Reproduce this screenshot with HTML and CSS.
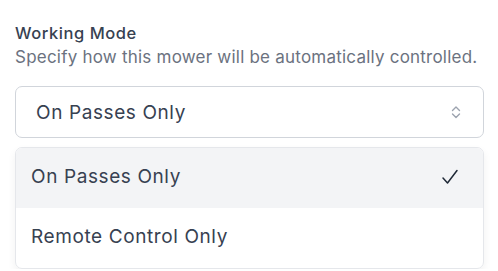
FILE: index.html
```html
<!DOCTYPE html>
<html>
<head>
<meta charset="utf-8">
<link rel="stylesheet" href="styles.css">
</head>
<body>
<div class="field">
  <div class="label">Working Mode</div>
  <div class="desc">Specify how this mower will be automatically controlled.</div>
  <div class="select">
    <span class="value">On Passes Only</span>
    <svg class="chev" width="12" height="18" viewBox="0 0 12 18" fill="none" stroke="#9ca3af" stroke-width="1.4" stroke-linecap="round" stroke-linejoin="round"><path d="M2.5 7.5 L6 4 L9.5 7.5"/><path d="M2.5 11 L6 14.5 L9.5 11"/></svg>
  </div>
  <div class="menu">
    <div class="option active">
      <span>On Passes Only</span>
      <svg class="check" width="18" height="18" viewBox="0 0 18 18" fill="none" stroke="#1f2937" stroke-width="1.5" stroke-linecap="round" stroke-linejoin="round"><path d="M2 10 L6.5 15 L16 2.5"/></svg>
    </div>
    <div class="option">
      <span>Remote Control Only</span>
    </div>
  </div>
</div>
</body>
</html>
```
FILE: styles.css
```css
html, body { margin: 0; padding: 0; background: #fff; }
body { font-family: Inter, "Noto Sans", sans-serif; }
.field { padding: 22px 14px 0 15px; }
.label { font-size: 16.5px; font-weight: 500; color: #374151; line-height: 22px; letter-spacing: 0.55px; }
.desc { font-size: 17px; color: #6b7280; line-height: 22px; margin-top: 2px; letter-spacing: 0.22px; }
.select {
  margin-top: 18px;
  height: 50px;
  border: 1px solid #d1d5db;
  border-radius: 7px;
  display: flex; align-items: center; justify-content: space-between;
  padding: 0 21px 0 20px;
}
.value { font-size: 19px; color: #374151; letter-spacing: 0.6px; }
.chev { display: block; }
.menu {
  margin-top: 9px;
  border: 1px solid #e5e7eb;
  border-radius: 7px;
  box-shadow: 0 4px 8px rgba(0,0,0,0.06);
  overflow: hidden;
}
.option {
  box-sizing: border-box;
  height: 60px;
  display: flex; align-items: center; justify-content: space-between;
  padding: 0 24px 3px 15px;
  font-size: 19px; color: #374151; letter-spacing: 0.6px;
}
.option.active { background: #f3f4f6; }
.check { display: block; }
```
